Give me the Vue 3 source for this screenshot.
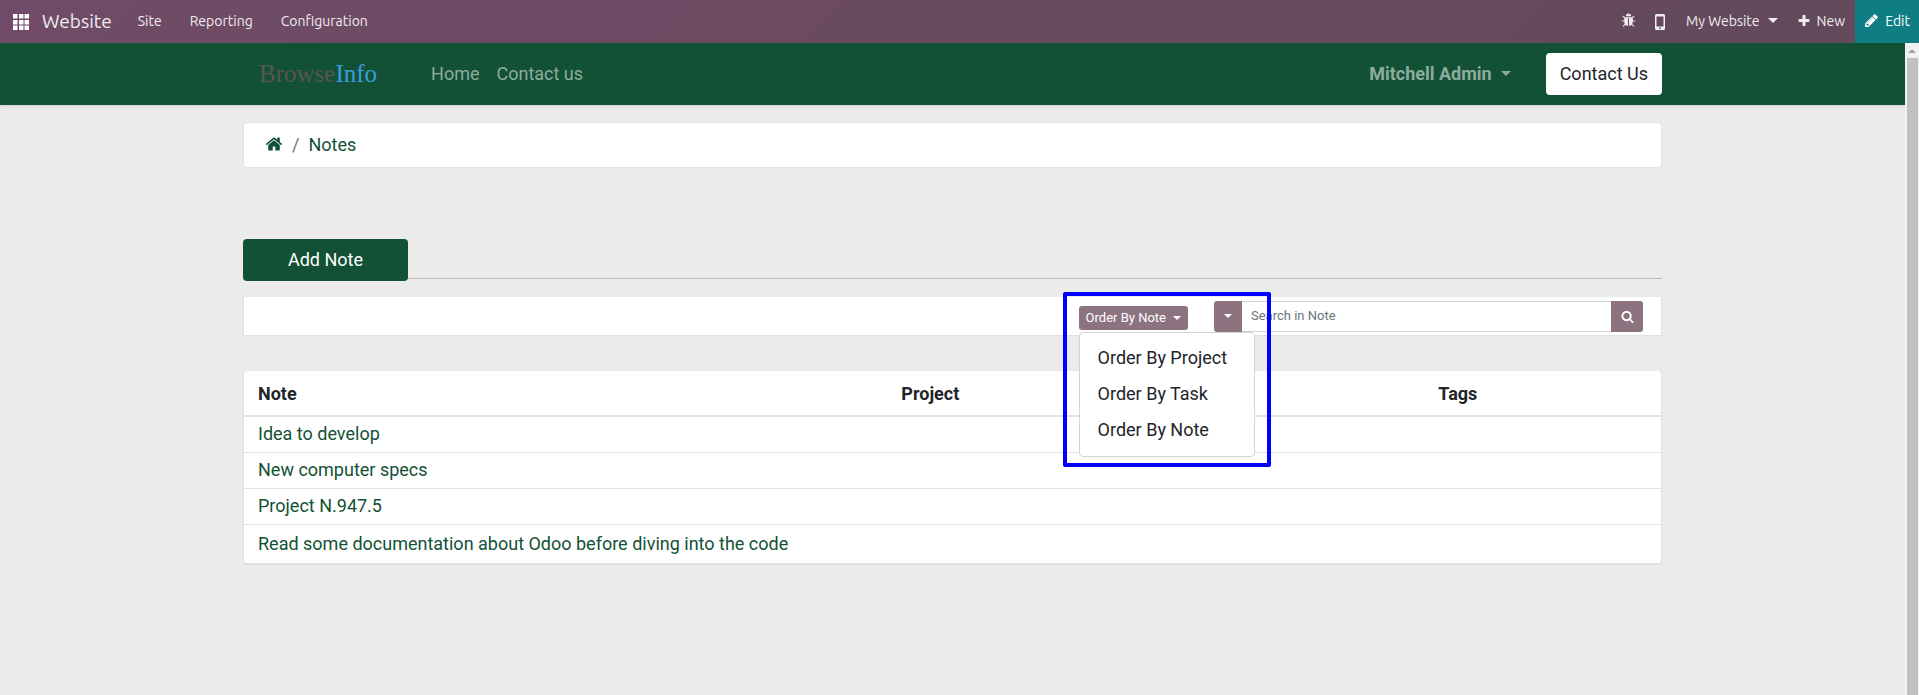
<script setup>
import { ref } from 'vue'

const menus = ['Site', 'Reporting', 'Configuration']
const orders = ['Order By Project', 'Order By Task', 'Order By Note']
const notes = [
  'Idea to develop',
  'New computer specs',
  'Project N.947.5',
  'Read some documentation about Odoo before diving into the code',
]
const open = ref(true)
const query = ref('')
</script>

<template>
  <div class="app">
    <nav class="topbar">
      <button class="apps" aria-label="Applications">
        <svg viewBox="0 0 16 16" width="16" height="16" fill="currentColor">
          <path d="M0 0h4.500v4.500h-4.500zM6 0h4.500v4.500h-4.500zM11.500 0h4.500v4.500h-4.500zM0 6h4.500v4.500h-4.500zM6 6h4.500v4.500h-4.500zM11.500 6h4.500v4.500h-4.500zM0 11.500h4.500v4.500h-4.500zM6 11.500h4.500v4.500h-4.500zM11.500 11.500h4.500v4.500h-4.500z" />
        </svg>
      </button>
      <a class="brand" href="#">Website</a>
      <a v-for="m in menus" :key="m" class="menu" href="#">{{ m }}</a>
      <div class="systray">
        <button class="tray bug" aria-label="Debug">
          <svg viewBox="0 0 1792 1792" width="15" height="15" fill="currentColor">
            <path d="M1696 960q0 26-19 45t-45 19h-224q0 171-67 290l208 209q19 19 19 45t-19 45q-18 19-45 19t-45-19l-198-197q-5 5-15 13t-42 28.500-65 36.500-82 29-97 13v-896h-128v896q-51 0-101.500-13.500t-87-33-66-39-43.500-32.500l-15-14-183 207q-20 21-48 21-24 0-43-16-19-18-20.500-44.500t15.500-46.500l202-227q-58-114-58-274h-224q-26 0-45-19t-19-45 19-45 45-19h224v-294l-173-173q-19-19-19-45t19-45 45-19 45 19l173 173h844l173-173q19-19 45-19t45 19 19 45-19 45l-173 173v294h224q26 0 45 19t19 45zm-480-576h-640q0-133 93.500-226.500t226.500-93.500 226.500 93.500 93.500 226.500z" />
          </svg>
        </button>
        <button class="tray phone" aria-label="Mobile preview">
          <svg viewBox="0 0 10 16" width="10" height="16" fill="currentColor" fill-rule="evenodd">
            <path d="M1.500 0h7a1.500 1.500 0 0 1 1.500 1.500v13a1.500 1.500 0 0 1-1.500 1.500h-7a1.500 1.500 0 0 1-1.500-1.500v-13a1.500 1.500 0 0 1 1.500-1.500zM1.500 2.500v10h7v-10zM5 13.300a.9.9 0 1 0 0 1.800a.9.9 0 0 0 0-1.800z" />
          </svg>
        </button>
        <button class="tray site">My Website<span class="caret"></span></button>
        <button class="tray new">
          <svg viewBox="0 0 1792 1792" width="14" height="14" fill="currentColor">
            <path d="M1600 736v192q0 40-28 68t-68 28h-416v416q0 40-28 68t-68 28h-192q-40 0-68-28t-28-68v-416h-416q-40 0-68-28t-28-68v-192q0-40 28-68t68-28h416v-416q0-40 28-68t68-28h192q40 0 68 28t28 68v416h416q40 0 68 28t28 68z" />
          </svg>
          New
        </button>
        <button class="tray edit">
          <svg viewBox="0 0 1792 1792" width="15" height="15" fill="currentColor">
            <path d="M491 1536l91-91-235-235-91 91v107h128v128h107zm523-928q0-22-22-22-10 0-17 7l-542 542q-7 7-7 17 0 22 22 22 10 0 17-7l542-542q7-7 7-17zm-54-192l416 416-832 832h-416v-416zm683 96q0 53-37 90l-166 166-416-416 166-165q36-38 90-38 53 0 91 38l235 234q37 39 37 91z" />
          </svg>
          Edit
        </button>
      </div>
    </nav>

    <div class="viewport">
      <div class="page">
        <header class="header">
          <div class="container headrow">
            <a class="logo" href="#"><span class="browse">Browse</span><span class="info">Info</span></a>
            <a class="navlink" href="#">Home</a>
            <a class="navlink" href="#">Contact us</a>
            <button class="user">Mitchell Admin<span class="caret"></span></button>
            <a class="contact" href="#">Contact Us</a>
          </div>
        </header>

        <main class="container">
          <nav class="breadcrumb" aria-label="Breadcrumb">
            <a href="#" aria-label="Home">
              <svg viewBox="0 0 1792 1792" width="18" height="18" fill="currentColor">
                <path d="M1472 992v480q0 26-19 45t-45 19h-384v-384h-256v384h-384q-26 0-45-19t-19-45v-480q0-1 .5-3t.5-3l575-474 575 474q1 2 1 6zm223-69l-62 74q-8 9-21 11h-3q-13 0-21-7l-692-577-692 577q-12 8-24 7-13-2-21-11l-62-74q-8-10-7-23.500t11-21.500l719-599q32-26 76-26t76 26l244 204v-195q0-14 9-23t23-9h192q14 0 23 9t9 23v408l219 182q10 8 11 21.500t-7 23.500z" />
              </svg>
            </a>
            <span class="slash">/</span>
            <a href="#">Notes</a>
          </nav>

          <div class="actions">
            <button class="add">Add Note</button>
          </div>

          <form class="filter" @submit.prevent>
            <div class="order">
              <button type="button" class="orderbtn" @click="open = !open">Order By Note<span class="caret"></span></button>
              <div v-if="open" class="dropdown">
                <a v-for="o in orders" :key="o" href="#">{{ o }}</a>
              </div>
              <div class="highlight"></div>
            </div>
            <div class="search">
              <button type="button" class="scope" aria-label="Search scope"><span class="caret"></span></button>
              <input v-model="query" type="text" placeholder="Search in Note" aria-label="Search in Note" />
              <button class="go" aria-label="Search">
                <svg viewBox="0 0 1792 1792" width="13" height="13" fill="currentColor">
                  <path d="M1216 832q0-185-131.500-316.500t-316.500-131.500-316.500 131.500-131.500 316.500 131.500 316.500 316.500 131.500 316.500-131.500 131.500-316.500zm512 832q0 52-38 90t-90 38q-54 0-90-38l-343-342q-179 124-399 124-143 0-273.500-55.500t-225-150-150-225-55.500-273.500 55.500-273.500 150-225 225-150 273.500-55.500 273.500 55.500 225 150 150 225 55.500 273.500q0 220-124 399l343 343q37 37 37 90z" />
                </svg>
              </button>
            </div>
          </form>

          <div class="card">
            <table>
              <colgroup>
                <col class="c-note" />
                <col class="c-project" />
                <col />
              </colgroup>
              <thead>
                <tr><th>Note</th><th>Project</th><th>Tags</th></tr>
              </thead>
              <tbody>
                <tr v-for="n in notes" :key="n">
                  <td><a href="#">{{ n }}</a></td><td></td><td></td>
                </tr>
              </tbody>
            </table>
          </div>
        </main>
      </div>
      <div class="scrollbar" aria-hidden="true">
        <span class="up"></span>
        <span class="thumb"></span>
      </div>
    </div>
  </div>
</template>

<style>
body {
  margin: 0;
  background: #ebebeb;
}
</style>

<style scoped>
.app, .app * { box-sizing: border-box; }
.app {
  display: flex;
  flex-direction: column;
  min-height: 100vh;
  font-family: Roboto, "Liberation Sans", sans-serif;
  font-size: 18px;
  line-height: 27px;
  color: #212529;
  background: #ebebeb;
}
a { color: #125135; text-decoration: none; }
button {
  display: flex;
  align-items: center;
  border: 0;
  padding: 0;
  background: none;
  color: inherit;
  font: inherit;
  white-space: nowrap;
  cursor: pointer;
}
.caret {
  border: 5px solid transparent;
  border-top-color: currentColor;
  border-bottom: 0;
}

.topbar {
  display: flex;
  align-items: center;
  height: 43px;
  padding-left: 13px;
  background: linear-gradient(135deg, #714b67, #62495b);
  color: #f0edf0;
  font-family: Ubuntu, "Noto Sans", sans-serif;
  font-size: 14px;
  line-height: 20px;
}
.topbar a { padding-bottom: 2px; color: inherit; }
.apps { color: #fff; }
.topbar .brand { margin-left: 13px; margin-right: 26px; font-size: 19px; }
.menu { margin-right: 28px; }
.systray { display: flex; align-self: stretch; margin-left: auto; }
.tray { padding-bottom: 2px; }
.phone { margin-left: 19px; padding-bottom: 0; }
.site { margin-left: 21px; }
.site .caret { margin-left: 8px; }
.new { margin-left: 19px; gap: 6px; }
.edit { margin-left: 10px; padding: 0 9px 2px; gap: 6px; background: #0f7e84; color: #fff; }

.viewport { display: flex; flex: 1; }
.page { flex: 1; min-width: 0; }
.container { width: 100%; max-width: 1419px; margin: 0 auto; }
.header {
  background: #125135;
  box-shadow: 0 2px 4px rgba(0, 0, 0, 0.08);
}
.headrow { display: flex; align-items: center; height: 62px; }
.logo {
  margin-left: 16px;
  margin-right: 54px;
  padding-bottom: 2px;
  font-family: "Liberation Serif", serif;
  font-size: 25px;
}
.browse { color: #5a5556; }
.info { color: #3b9de0; }
.navlink { margin-right: 17px; padding-bottom: 2px; color: #8eac9d; }
.user { margin-left: auto; padding-bottom: 2px; font-weight: 700; color: #8eac9d; }
.user .caret { margin-left: 9px; }
.contact {
  margin-left: 35px;
  padding: 7px 14px 8px;
  border-radius: 4px;
  background: #fff;
  color: #212529;
}

.breadcrumb {
  display: flex;
  align-items: center;
  height: 46px;
  margin-top: 17px;
  padding: 0 21px 2px;
  border: 1px solid #dee2e6;
  border-radius: 4px;
  background: #fff;
}
.breadcrumb svg { display: block; }
.slash { margin: 0 9px; color: #6c757d; }

.actions {
  display: flex;
  margin-top: 71px;
  border-bottom: 1px solid #bcbcbc;
}
.add {
  justify-content: center;
  width: 165px;
  height: 42px;
  margin-bottom: -3px;
  padding-bottom: 2px;
  border-radius: 4px;
  background: #125135;
  color: #fff;
}

.filter {
  display: flex;
  align-items: center;
  justify-content: flex-end;
  height: 39px;
  margin-top: 18px;
  padding-right: 18px;
  border: 1px solid #dedfe1;
  border-top: 0;
  background: #fff;
  font-size: 13px;
  line-height: 20px;
}
.filter .caret { border-width: 4px; border-bottom: 0; }
.order { position: relative; margin-top: 3px; margin-right: 26px; }
.orderbtn {
  height: 24px;
  padding: 0 7px;
  border-radius: 3px;
  background: #8c737f;
  color: #fff;
}
.orderbtn .caret { margin-left: 7px; }
.dropdown {
  position: absolute;
  z-index: 1;
  top: 26px;
  left: 0;
  width: 176px;
  padding: 7px 0 8px;
  border: 1px solid #d3d3d3;
  border-radius: 4px;
  background: #fff;
  font-size: 18px;
  line-height: 36px;
}
.dropdown a { display: block; padding: 0 18px; color: #212529; }
.highlight {
  position: absolute;
  z-index: 2;
  top: -14px;
  left: -16px;
  width: 208px;
  height: 175px;
  border: 4px solid #00f;
  border-radius: 2px;
  pointer-events: none;
}
.search { display: flex; width: 429px; height: 31px; }
.scope, .go {
  justify-content: center;
  background: #8c737f;
  color: #fff;
}
.scope { width: 28px; border-radius: 3px 0 0 3px; }
.go { width: 32px; border-radius: 0 3px 3px 0; }
.search input {
  flex: 1;
  min-width: 0;
  padding: 0 9px;
  border: 1px solid #ced4da;
  border-width: 1px 0;
  background: #fff;
  font: inherit;
  color: #212529;
  outline: 0;
}
.search input::placeholder { color: #6c757d; opacity: 1; }

.card {
  margin-top: 35px;
  border: 1px solid #dee0e3;
  border-width: 0 1px 2px;
  border-radius: 4px;
  background: #fff;
  overflow: hidden;
}
table { width: 100%; border-collapse: separate; border-spacing: 0; table-layout: fixed; }
.c-note { width: 45.4%; }
.c-project { width: 37.9%; }
th { height: 46px; padding: 0 14px; border-bottom: 2px solid #dee2e6; text-align: left; font-weight: 700; }
td { height: 36px; padding: 0 14px 2px; }
td { border-bottom: 1px solid #dee2e6; }
tr:last-child td { height: 38px; border-bottom: 0; }

.scrollbar {
  display: flex;
  flex-direction: column;
  align-items: center;
  width: 14px;
  background: #f1f1f1;
}
.up { margin: 6px 0 5px; border: 4px solid transparent; border-top: 0; border-bottom-color: #a3a3a3; }
.thumb { flex: 1; width: 11px; background: #c1c1c1; }
</style>
